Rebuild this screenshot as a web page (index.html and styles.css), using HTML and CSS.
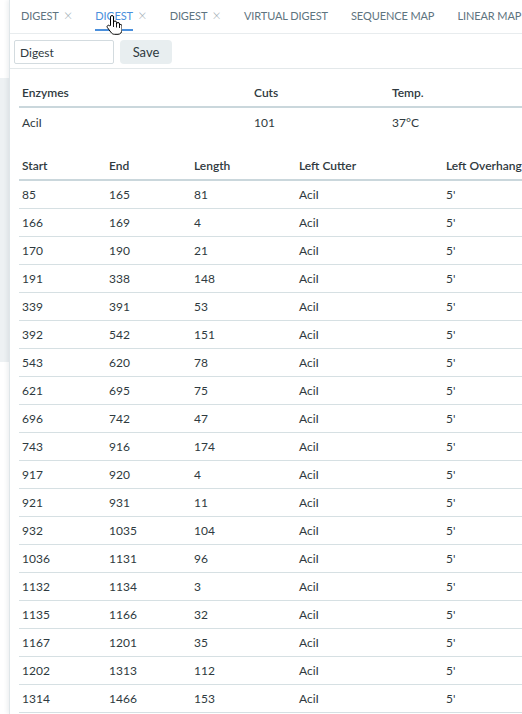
FILE: index.html
```html
<!DOCTYPE html>
<html lang="en">
<head>
    <meta charset="UTF-8">
    <meta name="viewport" content="width=device-width, initial-scale=1.0">
    <title>Digest</title>
    <link rel="stylesheet" href="styles.css">
</head>
<body>
    <div class="side">
        <div class="side-top"></div>
        <div class="side-mid"></div>
    </div>

    <div class="panel">
        <div class="tabs">
            <div class="tab"><span class="tab-label">Digest</span><span class="tab-close">&times;</span></div>
            <div class="tab active"><span class="tab-label">Digest</span><span class="tab-close">&times;</span>
                <!-- mouse pointer from the screenshot -->
                <svg class="pointer" width="16" height="20" viewBox="0 0 16 20">
                    <path d="M4.5 10.5V2a1.5 1.5 0 0 1 3 0v6.5V7.5a1.5 1.5 0 0 1 3 0v1.5a1.5 1.5 0 0 1 3 0v1a1.4 1.4 0 0 1 2.5 .8V15c0 2.5-1.8 4.3-4 4.3H8.5c-1.7 0-2.8-.9-3.8-2.3L1.3 12.4a1.4 1.4 0 0 1 2.2-1.7z" fill="#fff" stroke="#000" stroke-width="1" stroke-linejoin="round"/>
                    <path d="M7.5 8v4M10.5 9v3.5M13.5 10v3" stroke="#000" stroke-width=".9" fill="none"/>
                </svg>
            </div>
            <div class="tab"><span class="tab-label">Digest</span><span class="tab-close">&times;</span></div>
            <div class="tab"><span class="tab-label">Virtual Digest</span></div>
            <div class="tab"><span class="tab-label">Sequence Map</span></div>
            <div class="tab"><span class="tab-label">Linear Map</span></div>
        </div>

        <div class="toolbar">
            <input type="text" class="name-input" value="Digest">
            <button class="save-btn">Save</button>
        </div>

        <div class="tables">
            <table class="enzyme-table">
                <colgroup>
                    <col style="width: 232px">
                    <col style="width: 138px">
                    <col style="width: 160px">
                </colgroup>
                <thead>
                    <tr><th>Enzymes</th><th>Cuts</th><th>Temp.</th></tr>
                </thead>
                <tbody>
                    <tr><td>AciI</td><td>101</td><td>37°C</td></tr>
                </tbody>
            </table>

            <table class="fragment-table">
                <colgroup>
                    <col style="width: 87px">
                    <col style="width: 85px">
                    <col style="width: 105px">
                    <col style="width: 147px">
                    <col style="width: 120px">
                </colgroup>
                <thead>
                    <tr><th>Start</th><th>End</th><th>Length</th><th>Left Cutter</th><th>Left Overhang</th></tr>
                </thead>
                <tbody id="fragments"></tbody>
            </table>
        </div>
    </div>

    <script>
        const fragments = [
            [85, 165], [166, 169], [170, 190], [191, 338], [339, 391],
            [392, 542], [543, 620], [621, 695], [696, 742], [743, 916],
            [917, 920], [921, 931], [932, 1035], [1036, 1131], [1132, 1134],
            [1135, 1166], [1167, 1201], [1202, 1313], [1314, 1466]
        ];
        const body = document.getElementById('fragments');
        fragments.forEach(([start, end]) => {
            const row = document.createElement('tr');
            [start, end, end - start + 1, 'AciI', "5'"].forEach(value => {
                const cell = document.createElement('td');
                cell.textContent = value;
                row.appendChild(cell);
            });
            body.appendChild(row);
        });
    </script>
</body>
</html>
```

FILE: styles.css
```css
body {
    margin: 0;
    display: flex;
    height: 714px;
    overflow: hidden;
    font-family: "Lato", "Open Sans", sans-serif;
    color: #2f3a40;
    background: #fff;
}
.side {
    width: 9px;
    flex-shrink: 0;
}
.side-top {
    height: 78px;
}
.side-mid {
    height: 284px;
    background: #edf1f3;
}
.panel {
    flex: 1;
    min-width: 0;
    border-left: 1px solid #dfe6e9;
    box-shadow: -2px 0 4px rgba(40, 70, 80, 0.08);
    overflow: hidden;
}
.tabs {
    display: flex;
    gap: 23px;
    height: 33px;
    padding-left: 11px;
    border-bottom: 1px solid #e8ecee;
    white-space: nowrap;
}
.tab {
    position: relative;
    display: flex;
    align-items: center;
    gap: 5px;
    font-size: 11px;
    letter-spacing: -0.1px;
    text-transform: uppercase;
    color: #5e7480;
    height: 31px;
}
.tab-label {
    display: flex;
    align-items: center;
    height: 100%;
    box-sizing: border-box;
    border-bottom: 2px solid transparent;
    padding-top: 2px;
}
.tab-close {
    font-size: 15px;
    font-weight: 300;
    color: #9aa9b0;
    line-height: 1;
}
.tab.active .tab-label {
    color: #4a8fdc;
    border-bottom-color: #4a8fdc;
}
.pointer {
    position: absolute;
    left: 11px;
    top: 15px;
}
.toolbar {
    display: flex;
    gap: 6px;
    padding: 6px 4px 4px;
    border-bottom: 1px solid #e3e8ea;
}
.name-input {
    width: 100px;
    height: 24px;
    box-sizing: border-box;
    border: 1px solid #d3dbdf;
    border-radius: 2px;
    padding: 0 5px;
    font-family: inherit;
    font-size: 12px;
    color: #2f3a40;
}
.save-btn {
    width: 52px;
    height: 24px;
    border: none;
    border-radius: 4px;
    background: #e8eef0;
    font-family: inherit;
    font-size: 13px;
    color: #2f3a40;
}
.tables {
    padding: 10px 0 0 9px;
}
table {
    border-collapse: collapse;
    table-layout: fixed;
    font-size: 12px;
}
th, td {
    text-align: left;
    padding: 0 0 0 3px;
    height: 27px;
    white-space: nowrap;
    overflow: hidden;
}
th {
    font-weight: 600;
    border-bottom: 2px solid #cad7dc;
}
.enzyme-table {
    width: 530px;
    margin-bottom: 16px;
}
.enzyme-table td {
    height: 28px;
}
.fragment-table {
    width: 544px;
}
.fragment-table td {
    border-bottom: 1px solid #d6e0e3;
}
```
